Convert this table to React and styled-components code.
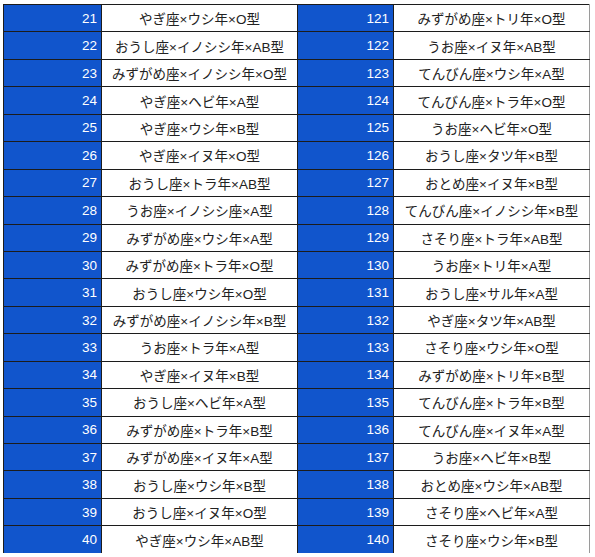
import styled, { createGlobalStyle } from 'styled-components';

const GlobalStyle = createGlobalStyle`
  body {
    margin: 0;
    background: #ffffff;
  }
`;

const left = [
  [21, 'やぎ座×ウシ年×O型'],
  [22, 'おうし座×イノシシ年×AB型'],
  [23, 'みずがめ座×イノシシ年×O型'],
  [24, 'やぎ座×ヘビ年×A型'],
  [25, 'やぎ座×ウシ年×B型'],
  [26, 'やぎ座×イヌ年×O型'],
  [27, 'おうし座×トラ年×AB型'],
  [28, 'うお座×イノシシ座×A型'],
  [29, 'みずがめ座×ウシ年×A型'],
  [30, 'みずがめ座×トラ年×O型'],
  [31, 'おうし座×ウシ年×O型'],
  [32, 'みずがめ座×イノシシ年×B型'],
  [33, 'うお座×トラ年×A型'],
  [34, 'やぎ座×イヌ年×B型'],
  [35, 'おうし座×ヘビ年×A型'],
  [36, 'みずがめ座×トラ年×B型'],
  [37, 'みずがめ座×イヌ年×A型'],
  [38, 'おうし座×ウシ年×B型'],
  [39, 'おうし座×イヌ年×O型'],
  [40, 'やぎ座×ウシ年×AB型'],
];

const right = [
  [121, 'みずがめ座×トリ年×O型'],
  [122, 'うお座×イヌ年×AB型'],
  [123, 'てんびん座×ウシ年×A型'],
  [124, 'てんびん座×トラ年×O型'],
  [125, 'うお座×ヘビ年×O型'],
  [126, 'おうし座×タツ年×B型'],
  [127, 'おとめ座×イヌ年×B型'],
  [128, 'てんびん座×イノシシ年×B型'],
  [129, 'さそり座×トラ年×AB型'],
  [130, 'うお座×トリ年×A型'],
  [131, 'おうし座×サル年×A型'],
  [132, 'やぎ座×タツ年×AB型'],
  [133, 'さそり座×ウシ年×O型'],
  [134, 'みずがめ座×トリ年×B型'],
  [135, 'てんびん座×トラ年×B型'],
  [136, 'てんびん座×イヌ年×A型'],
  [137, 'うお座×ヘビ年×B型'],
  [138, 'おとめ座×ウシ年×AB型'],
  [139, 'さそり座×ヘビ年×A型'],
  [140, 'さそり座×ウシ年×B型'],
];

const Frame = styled.div`
  width: 595px;
  height: 553px;
  overflow: hidden;
  padding: 4px 0 0 3px;
  box-sizing: border-box;
`;

const Sheet = styled.table`
  border-collapse: collapse;
  table-layout: fixed;
  width: 586px;
`;

const Row = styled.tr`
  height: ${(p) => (p.$stub ? '4px' : '27.45px')};
`;

const NumCell = styled.td`
  background: #1155cc;
  color: #ffffff;
  font-family: 'Liberation Sans', Arial, sans-serif;
  font-size: 13.5px;
  text-align: right;
  padding: 0 4px 0 0;
  border: 1px solid #1c1c1c;
  white-space: nowrap;
  overflow: hidden;
`;

const TextCell = styled.td`
  background: #ffffff;
  color: #222222;
  font-family: 'Liberation Sans', 'Noto Sans CJK JP', sans-serif;
  font-size: 13.5px;
  text-align: center;
  padding: 0;
  border: 1px solid #1c1c1c;
  border-right-color: ${(p) => (p.$edge ? '#9a9a9a' : '#1c1c1c')};
  white-space: nowrap;
  overflow: hidden;
`;

export default function App() {
  return (
    <>
      <GlobalStyle />
      <Frame>
        <Sheet>
          <colgroup>
            <col style={{ width: 98 }} />
            <col style={{ width: 196 }} />
            <col style={{ width: 96 }} />
            <col style={{ width: 196 }} />
          </colgroup>
          <tbody>
            {left.map(([n, label], i) => (
              <Row key={n}>
                <NumCell>{n}</NumCell>
                <TextCell>{label}</TextCell>
                <NumCell>{right[i][0]}</NumCell>
                <TextCell $edge>{right[i][1]}</TextCell>
              </Row>
            ))}
            <Row $stub>
              <NumCell />
              <TextCell />
              <NumCell />
              <TextCell $edge />
            </Row>
          </tbody>
        </Sheet>
      </Frame>
    </>
  );
}
